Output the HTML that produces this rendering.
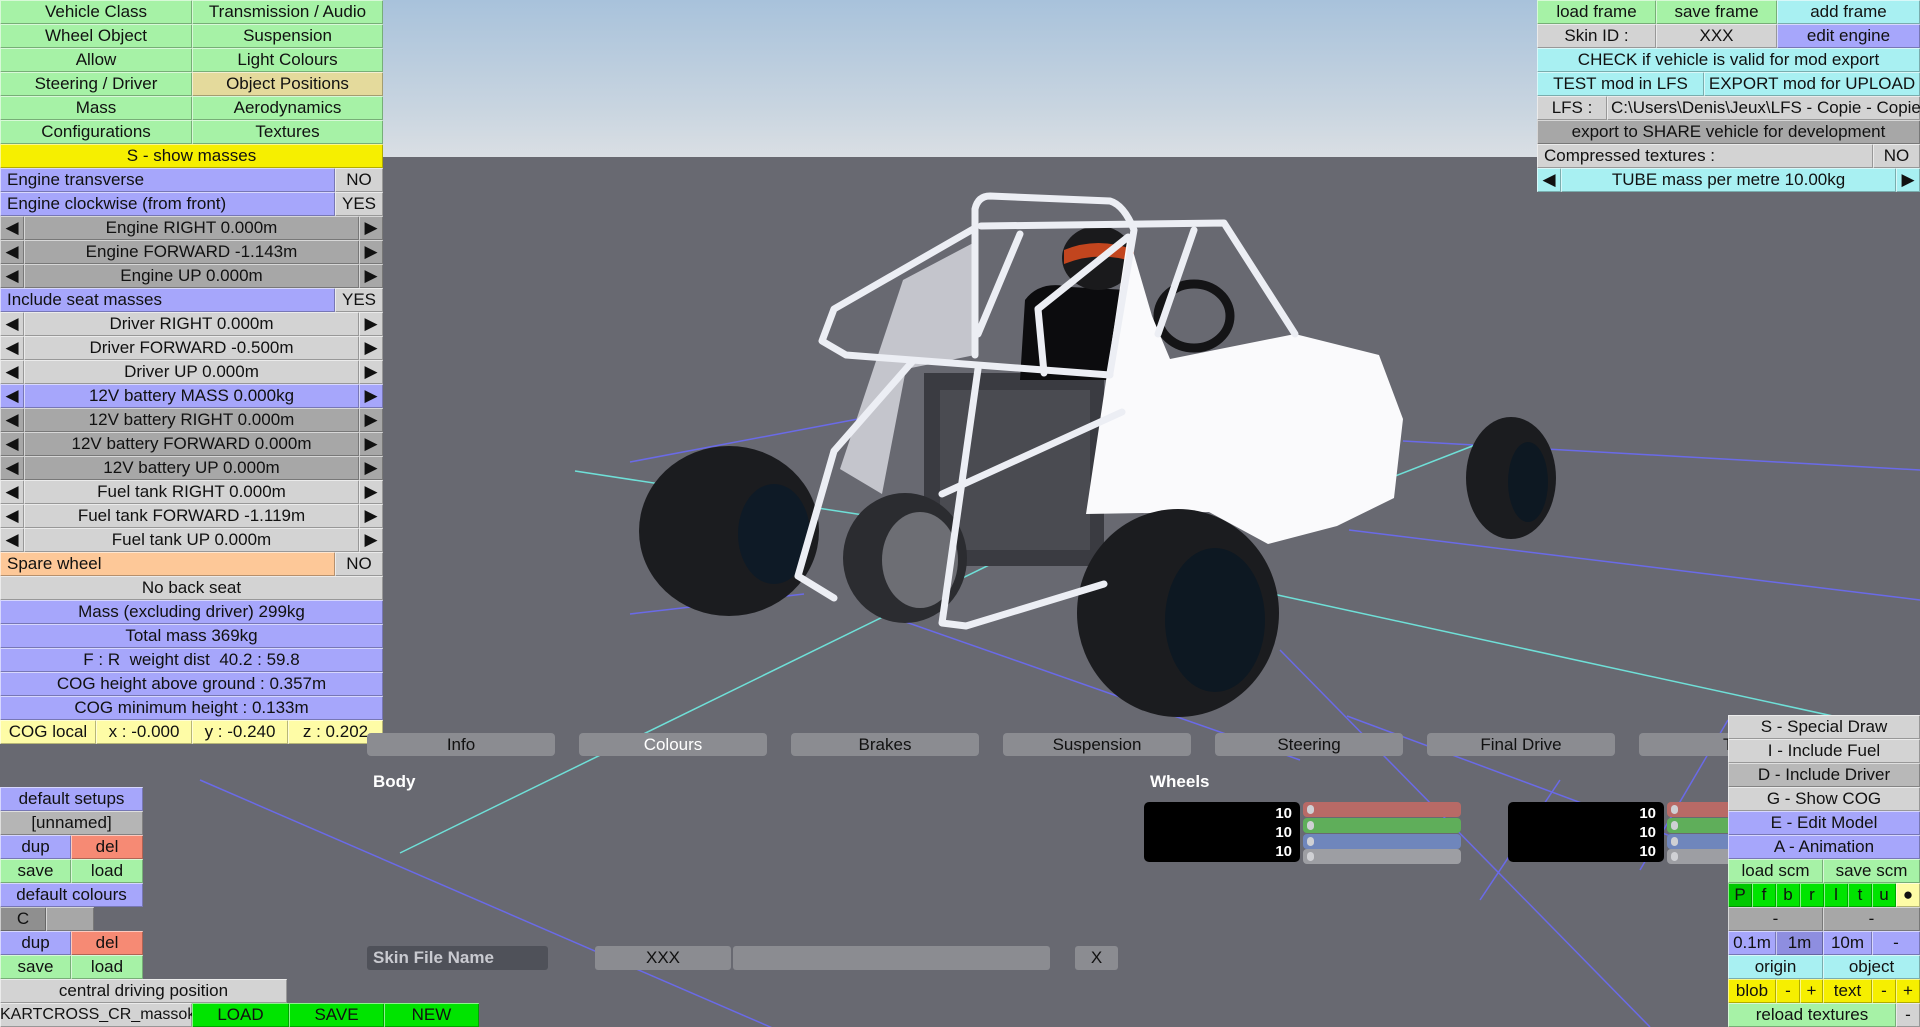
<!DOCTYPE html>
<html><head><meta charset="utf-8"><style>
*{margin:0;padding:0;box-sizing:border-box}
html{width:1920px;height:1027px;overflow:hidden}
body{width:1920px;height:1027px;overflow:hidden;position:relative;background:#686971;font-family:"Liberation Sans",sans-serif}
.sky{position:absolute;left:0;top:0;width:1920px;height:157px;background:linear-gradient(#a8c2db,#c9d5e0 70%,#dadfe4)}
.c{position:absolute;height:24px;line-height:24px;text-align:center;font-size:17px;color:#111;white-space:nowrap;overflow:hidden;box-shadow:inset 1px 1px 0 rgba(255,255,255,.55),inset -1px -1px 0 rgba(0,0,0,.28)}
.l{text-align:left;padding-left:7px}
.g{background:#a6f2a6}.y{background:#f6ef00}.b{background:#a6a6fb}.lg{background:#d3d3d3}.dg{background:#a7a7a7}
.p{background:#fdc898}.py{background:#fefca6}.cy{background:#a8f0f2}.r{background:#f68a74}.bg{background:#00e400}.t{background:#e4da9c}.mg{background:#8f8f8f}.bb{background:#00c800}
.tab{position:absolute;top:733px;height:23px;width:188px;background:#8b8c91;border-radius:4px;text-align:center;line-height:23px;font-size:17px;color:#111}
.lab{position:absolute;color:#fff;font-weight:bold;font-size:17px}
.wb{position:absolute;background:#000;border-radius:5px;width:156px;height:60px;color:#fff;text-align:right;font-size:15px;line-height:19px;padding:2px 8px 0 0;font-weight:bold}
.bar{position:absolute;height:15px;width:158px;border-radius:4px}
.bar::before{content:"";position:absolute;left:4px;top:3px;width:7px;height:9px;border-radius:4px;background:#cfd0d4}
svg{display:block}
</style></head><body>
<div class="sky"></div>
<svg style="position:absolute;left:0;top:0" width="1920" height="1027">
<g stroke="#6a6ae8" stroke-width="1.5" fill="none">
<line x1="200" y1="780" x2="1920" y2="1525"/>
<line x1="630" y1="462" x2="858" y2="419"/>
<line x1="630" y1="614" x2="804" y2="594"/>
<line x1="1403" y1="441" x2="1920" y2="470"/>
<line x1="1349" y1="530" x2="1920" y2="600"/>
<line x1="1347" y1="716" x2="1727" y2="857"/>
<line x1="900" y1="620" x2="1300" y2="760"/>
<line x1="1280" y1="650" x2="1650" y2="1027"/>
<line x1="1480" y1="900" x2="1560" y2="780"/>
<line x1="1640" y1="870" x2="1728" y2="720"/>
</g>
<g stroke="#6fe0d8" stroke-width="1.5" fill="none">
<line x1="400" y1="853" x2="1030" y2="545"/>
<line x1="1273" y1="594" x2="1920" y2="735"/>
<line x1="1385" y1="480" x2="1475" y2="445"/>
<line x1="575" y1="471" x2="870" y2="516"/>
</g>
<polygon points="903,280 975,242 975,355 906,369 882,494 840,469" fill="#c4c5cc"/>
<rect x="924" y="373" width="180" height="193" fill="#3a3b41"/>
<rect x="940" y="390" width="150" height="160" fill="#55565c" opacity=".6"/>
<ellipse cx="905" cy="558" rx="62" ry="65" fill="#2b2c30"/>
<ellipse cx="920" cy="560" rx="38" ry="48" fill="#6d6e74"/>
<path d="M1020 380 L1025 300 Q1040 280 1070 287 L1128 290 L1128 380Z" fill="#0c0c0e"/>
<ellipse cx="1098" cy="258" rx="36" ry="32" fill="#1a1a1c"/>
<path d="M1064 250 Q1098 236 1134 250 L1134 262 Q1098 250 1064 264Z" fill="#c2451e"/>
<ellipse cx="1194" cy="316" rx="36" ry="32" fill="none" stroke="#141416" stroke-width="9"/>
<polygon points="1295,334 1379,355 1403,419 1394,498 1337,526 1268,544 1209,512 1086,514 1104,394 1128,234 1152,316 1170,359" fill="#fafafc"/>
<ellipse cx="729" cy="531" rx="90" ry="85" fill="#1b1c1f"/>
<ellipse cx="774" cy="534" rx="36" ry="50" fill="#0e1a26"/>
<ellipse cx="1178" cy="613" rx="101" ry="104" fill="#1b1c1f"/>
<ellipse cx="1215" cy="620" rx="50" ry="72" fill="#0d1822"/>
<ellipse cx="1511" cy="478" rx="45" ry="61" fill="#1b1c1f"/>
<ellipse cx="1528" cy="482" rx="20" ry="40" fill="#0d1822"/>
<g stroke="#eceef4" stroke-width="7" fill="none" stroke-linejoin="round" stroke-linecap="round">
<path d="M975 355 L975 209 Q978 196 990 196 L1110 201 Q1124 205 1134 230 L1110 373"/>
<path d="M981 226 L1224 223 L1295 334"/>
<path d="M1194 230 L1158 334"/>
<path d="M975 228 L834 309 L822 341 L846 355 L1110 375"/>
<path d="M1020 234 L978 334"/>
<path d="M912 362 L834 451 L798 576 L834 598"/>
<path d="M978 369 L942 623 L966 626 L1104 584"/>
<path d="M1122 412 L942 494"/>
<path d="M1038 309 L1128 237"/>
<path d="M1038 309 L1044 373"/>
</g>
</svg>

<div class="c g" style="left:0;top:0;width:192px">Vehicle Class</div><div class="c g" style="left:192px;top:0;width:191px">Transmission / Audio</div>
<div class="c g" style="left:0;top:24px;width:192px">Wheel Object</div><div class="c g" style="left:192px;top:24px;width:191px">Suspension</div>
<div class="c g" style="left:0;top:48px;width:192px">Allow</div><div class="c g" style="left:192px;top:48px;width:191px">Light Colours</div>
<div class="c g" style="left:0;top:72px;width:192px">Steering / Driver</div><div class="c t" style="left:192px;top:72px;width:191px">Object Positions</div>
<div class="c g" style="left:0;top:96px;width:192px">Mass</div><div class="c g" style="left:192px;top:96px;width:191px">Aerodynamics</div>
<div class="c g" style="left:0;top:120px;width:192px">Configurations</div><div class="c g" style="left:192px;top:120px;width:191px">Textures</div>
<div class="c y" style="left:0;top:144px;width:383px">S - show masses</div>
<div class="c b l" style="left:0;top:168px;width:335px">Engine transverse</div><div class="c lg" style="left:335px;top:168px;width:48px">NO</div>
<div class="c b l" style="left:0;top:192px;width:335px">Engine clockwise (from front)</div><div class="c lg" style="left:335px;top:192px;width:48px">YES</div>
<div class="c dg" style="left:0;top:216px;width:24px">◀</div><div class="c dg" style="left:24px;top:216px;width:335px">Engine RIGHT 0.000m</div><div class="c dg" style="left:359px;top:216px;width:24px">▶</div>
<div class="c dg" style="left:0;top:240px;width:24px">◀</div><div class="c dg" style="left:24px;top:240px;width:335px">Engine FORWARD -1.143m</div><div class="c dg" style="left:359px;top:240px;width:24px">▶</div>
<div class="c dg" style="left:0;top:264px;width:24px">◀</div><div class="c dg" style="left:24px;top:264px;width:335px">Engine UP 0.000m</div><div class="c dg" style="left:359px;top:264px;width:24px">▶</div>
<div class="c b l" style="left:0;top:288px;width:335px">Include seat masses</div><div class="c lg" style="left:335px;top:288px;width:48px">YES</div>
<div class="c lg" style="left:0;top:312px;width:24px">◀</div><div class="c lg" style="left:24px;top:312px;width:335px">Driver RIGHT 0.000m</div><div class="c lg" style="left:359px;top:312px;width:24px">▶</div>
<div class="c lg" style="left:0;top:336px;width:24px">◀</div><div class="c lg" style="left:24px;top:336px;width:335px">Driver FORWARD -0.500m</div><div class="c lg" style="left:359px;top:336px;width:24px">▶</div>
<div class="c lg" style="left:0;top:360px;width:24px">◀</div><div class="c lg" style="left:24px;top:360px;width:335px">Driver UP 0.000m</div><div class="c lg" style="left:359px;top:360px;width:24px">▶</div>
<div class="c b" style="left:0;top:384px;width:24px">◀</div><div class="c b" style="left:24px;top:384px;width:335px">12V battery MASS 0.000kg</div><div class="c b" style="left:359px;top:384px;width:24px">▶</div>
<div class="c dg" style="left:0;top:408px;width:24px">◀</div><div class="c dg" style="left:24px;top:408px;width:335px">12V battery RIGHT 0.000m</div><div class="c dg" style="left:359px;top:408px;width:24px">▶</div>
<div class="c dg" style="left:0;top:432px;width:24px">◀</div><div class="c dg" style="left:24px;top:432px;width:335px">12V battery FORWARD 0.000m</div><div class="c dg" style="left:359px;top:432px;width:24px">▶</div>
<div class="c dg" style="left:0;top:456px;width:24px">◀</div><div class="c dg" style="left:24px;top:456px;width:335px">12V battery UP 0.000m</div><div class="c dg" style="left:359px;top:456px;width:24px">▶</div>
<div class="c lg" style="left:0;top:480px;width:24px">◀</div><div class="c lg" style="left:24px;top:480px;width:335px">Fuel tank RIGHT 0.000m</div><div class="c lg" style="left:359px;top:480px;width:24px">▶</div>
<div class="c lg" style="left:0;top:504px;width:24px">◀</div><div class="c lg" style="left:24px;top:504px;width:335px">Fuel tank FORWARD -1.119m</div><div class="c lg" style="left:359px;top:504px;width:24px">▶</div>
<div class="c lg" style="left:0;top:528px;width:24px">◀</div><div class="c lg" style="left:24px;top:528px;width:335px">Fuel tank UP 0.000m</div><div class="c lg" style="left:359px;top:528px;width:24px">▶</div>
<div class="c p l" style="left:0;top:552px;width:335px">Spare wheel</div><div class="c lg" style="left:335px;top:552px;width:48px">NO</div>
<div class="c lg" style="left:0;top:576px;width:383px">No back seat</div>
<div class="c b" style="left:0;top:600px;width:383px">Mass (excluding driver) 299kg</div>
<div class="c b" style="left:0;top:624px;width:383px">Total mass 369kg</div>
<div class="c b" style="left:0;top:648px;width:383px">F : R &nbsp;weight dist &nbsp;40.2 : 59.8</div>
<div class="c b" style="left:0;top:672px;width:383px">COG height above ground : 0.357m</div>
<div class="c b" style="left:0;top:696px;width:383px">COG minimum height : 0.133m</div>
<div class="c py" style="left:0;top:720px;width:96px">COG local</div><div class="c py" style="left:96px;top:720px;width:96px">x : -0.000</div><div class="c py" style="left:192px;top:720px;width:96px">y : -0.240</div><div class="c py" style="left:288px;top:720px;width:95px">z : 0.202</div>

<div class="c g" style="left:1537px;top:0;width:119px">load frame</div><div class="c g" style="left:1656px;top:0;width:121px">save frame</div><div class="c cy" style="left:1777px;top:0;width:143px">add frame</div>
<div class="c lg" style="left:1537px;top:24px;width:119px">Skin ID :</div><div class="c lg" style="left:1656px;top:24px;width:121px">XXX</div><div class="c b" style="left:1777px;top:24px;width:143px">edit engine</div>
<div class="c cy" style="left:1537px;top:48px;width:383px">CHECK if vehicle is valid for mod export</div>
<div class="c cy" style="left:1537px;top:72px;width:167px">TEST mod in LFS</div><div class="c cy" style="left:1704px;top:72px;width:216px">EXPORT mod for UPLOAD</div>
<div class="c lg" style="left:1537px;top:96px;width:70px">LFS :</div><div class="c lg l" style="left:1607px;top:96px;width:313px;padding-left:4px">C:\Users\Denis\Jeux\LFS - Copie - Copie</div>
<div class="c dg" style="left:1537px;top:120px;width:383px">export to SHARE vehicle for development</div>
<div class="c lg l" style="left:1537px;top:144px;width:336px">Compressed textures :</div><div class="c lg" style="left:1873px;top:144px;width:47px">NO</div>
<div class="c cy" style="left:1537px;top:168px;width:24px">◀</div><div class="c cy" style="left:1561px;top:168px;width:335px">TUBE mass per metre 10.00kg</div><div class="c cy" style="left:1896px;top:168px;width:24px">▶</div>

<div class="tab" style="left:367px">Info</div>
<div class="tab" style="left:579px;color:#fff">Colours</div>
<div class="tab" style="left:791px">Brakes</div>
<div class="tab" style="left:1003px">Suspension</div>
<div class="tab" style="left:1215px">Steering</div>
<div class="tab" style="left:1427px">Final Drive</div>
<div class="tab" style="left:1639px;text-align:left;padding-left:84px">Tyres</div>
<div class="lab" style="left:373px;top:772px">Body</div>
<div class="lab" style="left:1150px;top:772px">Wheels</div>
<div class="wb" style="left:1144px;top:802px">10<br>10<br>10</div>
<div class="bar" style="left:1303px;top:802px;background:#b86a66"></div>
<div class="bar" style="left:1303px;top:818px;background:#5fae5a"></div>
<div class="bar" style="left:1303px;top:834px;background:#6f86bc"></div>
<div class="bar" style="left:1303px;top:849px;background:#9d9ea3"></div>
<div class="wb" style="left:1508px;top:802px">10<br>10<br>10</div>
<div class="bar" style="left:1667px;top:802px;background:#b86a66"></div>
<div class="bar" style="left:1667px;top:818px;background:#5fae5a"></div>
<div class="bar" style="left:1667px;top:834px;background:#6f86bc"></div>
<div class="bar" style="left:1667px;top:849px;background:#9d9ea3"></div>

<div style="position:absolute;left:367px;top:946px;width:181px;height:24px;background:#4f5159;border-radius:3px;color:#c9cad0;font-size:17px;line-height:24px;padding-left:6px;font-weight:bold">Skin File Name</div>
<div style="position:absolute;left:595px;top:946px;width:136px;height:24px;background:#8b8c91;border-radius:3px;text-align:center;line-height:24px;font-size:17px;color:#111">XXX</div>
<div style="position:absolute;left:733px;top:946px;width:317px;height:24px;background:#8b8c91;border-radius:3px"></div>
<div style="position:absolute;left:1075px;top:946px;width:43px;height:24px;background:#8b8c91;border-radius:3px;text-align:center;line-height:24px;font-size:17px;color:#111">X</div>

<div class="c b" style="left:0;top:787px;width:143px">default setups</div>
<div class="c dg" style="left:0;top:811px;width:143px;background:#b5b5b5">[unnamed]</div>
<div class="c b" style="left:0;top:835px;width:71px">dup</div><div class="c r" style="left:71px;top:835px;width:72px">del</div>
<div class="c g" style="left:0;top:859px;width:71px">save</div><div class="c g" style="left:71px;top:859px;width:72px">load</div>
<div class="c b" style="left:0;top:883px;width:143px">default colours</div>
<div class="c mg" style="left:0;top:907px;width:46px">C</div><div class="c dg" style="left:46px;top:907px;width:48px"></div>
<div class="c b" style="left:0;top:931px;width:71px">dup</div><div class="c r" style="left:71px;top:931px;width:72px">del</div>
<div class="c g" style="left:0;top:955px;width:71px">save</div><div class="c g" style="left:71px;top:955px;width:72px">load</div>
<div class="c lg" style="left:0;top:979px;width:287px">central driving position</div>
<div class="c lg" style="left:0;top:1003px;width:192px;font-size:16px">KARTCROSS_CR_massok</div><div class="c bg" style="left:192px;top:1003px;width:97px">LOAD</div><div class="c bg" style="left:289px;top:1003px;width:95px">SAVE</div><div class="c bg" style="left:384px;top:1003px;width:95px">NEW</div>

<div class="c lg" style="left:1728px;top:715px;width:192px">S - Special Draw</div>
<div class="c lg" style="left:1728px;top:739px;width:192px">I - Include Fuel</div>
<div class="c dg" style="left:1728px;top:763px;width:192px;background:#b8b8b8">D - Include Driver</div>
<div class="c lg" style="left:1728px;top:787px;width:192px">G - Show COG</div>
<div class="c b" style="left:1728px;top:811px;width:192px">E - Edit Model</div>
<div class="c b" style="left:1728px;top:835px;width:192px">A - Animation</div>
<div class="c g" style="left:1728px;top:859px;width:95px">load scm</div><div class="c g" style="left:1823px;top:859px;width:97px">save scm</div>
<div class="c bb" style="left:1728px;top:883px;width:24px">P</div><div class="c bg" style="left:1752px;top:883px;width:24px">f</div><div class="c bg" style="left:1776px;top:883px;width:24px">b</div><div class="c bg" style="left:1800px;top:883px;width:24px">r</div><div class="c bg" style="left:1824px;top:883px;width:24px">l</div><div class="c bg" style="left:1848px;top:883px;width:24px">t</div><div class="c bg" style="left:1872px;top:883px;width:24px">u</div><div class="c py" style="left:1896px;top:883px;width:24px">●</div>
<div class="c dg" style="left:1728px;top:907px;width:95px">-</div><div class="c dg" style="left:1823px;top:907px;width:97px">-</div>
<div class="c b" style="left:1728px;top:931px;width:48px">0.1m</div><div class="c b" style="left:1776px;top:931px;width:47px;background:#8e8ee0">1m</div><div class="c b" style="left:1823px;top:931px;width:49px">10m</div><div class="c b" style="left:1872px;top:931px;width:48px">-</div>
<div class="c cy" style="left:1728px;top:955px;width:95px">origin</div><div class="c cy" style="left:1823px;top:955px;width:97px">object</div>
<div class="c y" style="left:1728px;top:979px;width:48px">blob</div><div class="c y" style="left:1776px;top:979px;width:24px">-</div><div class="c y" style="left:1800px;top:979px;width:23px">+</div><div class="c y" style="left:1823px;top:979px;width:49px">text</div><div class="c y" style="left:1872px;top:979px;width:24px">-</div><div class="c y" style="left:1896px;top:979px;width:24px">+</div>
<div class="c g" style="left:1728px;top:1003px;width:168px">reload textures</div><div class="c lg" style="left:1896px;top:1003px;width:24px">-</div>
</body></html>
